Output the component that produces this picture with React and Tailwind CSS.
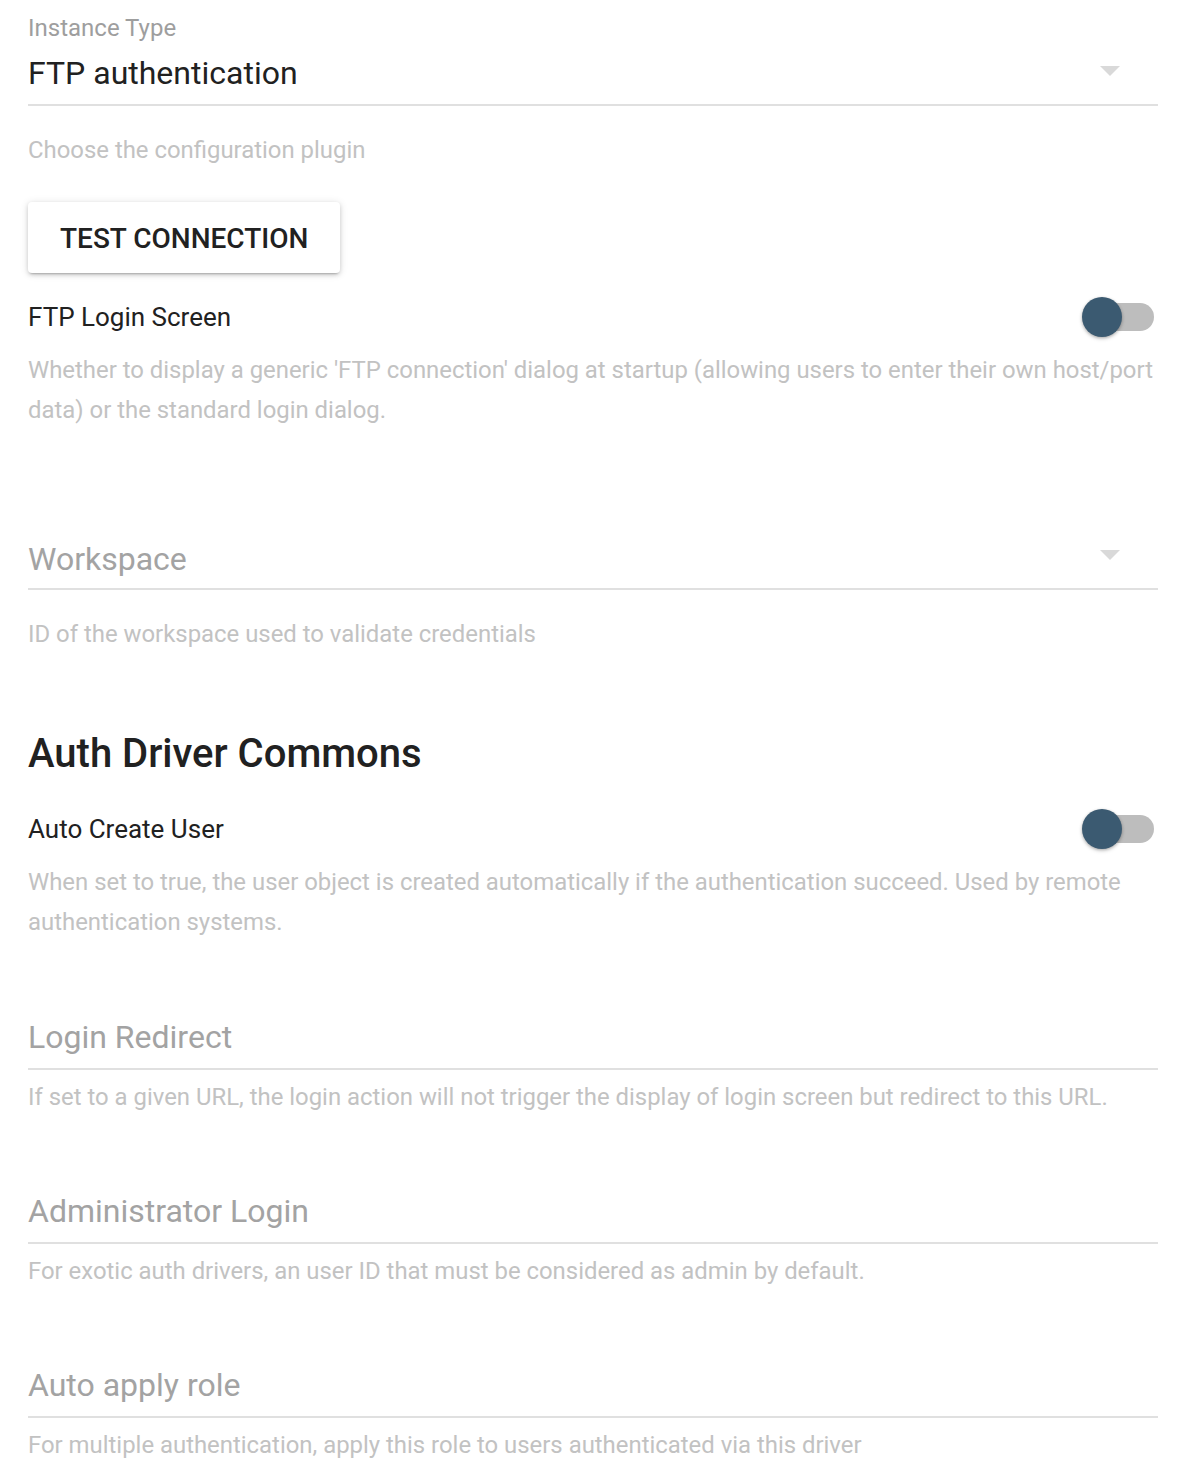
import React from 'react';

const Arrow = ({ className }) => (
  <svg className={className} width="20" height="10" viewBox="0 0 20 10">
    <path d="M0 0 L20 0 L10 10 Z" fill="#d9d9d9" />
  </svg>
);

const Toggle = () => (
  <div className="relative w-[72px] h-[40px] mr-[4px] shrink-0">
    <div className="absolute right-0 top-[6px] h-[28px] w-[68px] rounded-full bg-[#bdbdbd]" />
    <div className="absolute left-0 top-0 h-[40px] w-[40px] rounded-full bg-[#3b5a71] shadow-[0_1px_3px_rgba(0,0,0,0.25),0_2px_4px_rgba(0,0,0,0.12)]" />
  </div>
);

// plain text field: floating label as placeholder, underline, helper
const TextField = ({ label, helper, className }) => (
  <div className={className}>
    <div className="pb-[15px] border-b-2 border-[#e0e0e0]">
      <div className="text-[32px] leading-[32px] text-[#a3a3a3]">{label}</div>
    </div>
    <div className="mt-[15px] text-[23.9px] leading-[24px] text-[#c2c2c2]">{helper}</div>
  </div>
);

const SwitchRow = ({ label, helper, className }) => (
  <div className={className}>
    <div className="flex items-center justify-between h-[40px]">
      <span className="text-[26px] text-[#212121]">{label}</span>
      <Toggle />
    </div>
    <p className="mt-[13px] text-[23.9px] leading-[40px] text-[#c2c2c2]">{helper}</p>
  </div>
);

export default function App() {
  return (
    <div className="min-h-screen bg-white font-['Roboto',sans-serif] pl-[28px] pr-[22px] pt-[16px] pb-[10px]">
      {/* Instance type select */}
      <div>
        <div className="text-[24px] leading-[24px] text-[#9e9e9e]">Instance Type</div>
        <div className="mt-[17px] pb-[15px] border-b-2 border-[#e0e0e0] flex justify-between items-start">
          <span className="text-[32px] leading-[32px] text-[#212121]">FTP authentication</span>
          <Arrow className="mt-[9px] mr-[38px]" />
        </div>
        <div className="mt-[32px] text-[23.9px] leading-[24px] text-[#c2c2c2]">Choose the configuration plugin</div>
      </div>

      <button className="mt-[40px] h-[71px] pt-[3px] px-[32px] rounded-[4px] bg-white text-[28px] font-medium text-[#212121] shadow-[0_3px_2px_-2px_rgba(0,0,0,0.2),0_2px_4px_0_rgba(0,0,0,0.14),0_1px_8px_0_rgba(0,0,0,0.12)]">
        TEST CONNECTION
      </button>

      <SwitchRow
        className="mt-[24px]"
        label="FTP Login Screen"
        helper="Whether to display a generic 'FTP connection' dialog at startup (allowing users to enter their own host/port data) or the standard login dialog."
      />

      {/* Workspace select */}
      <div className="mt-[113px]">
        <div className="pb-[13px] border-b-2 border-[#e0e0e0] flex justify-between items-start">
          <span className="text-[32px] leading-[32px] text-[#a3a3a3]">Workspace</span>
          <Arrow className="mt-[7px] mr-[38px]" />
        </div>
        <div className="mt-[32px] text-[23.9px] leading-[24px] text-[#c2c2c2]">ID of the workspace used to validate credentials</div>
      </div>

      <h2 className="mt-[84px] text-[40px] leading-[48px] font-medium text-[#212121]">Auth Driver Commons</h2>

      <SwitchRow
        className="mt-[31px]"
        label="Auto Create User"
        helper="When set to true, the user object is created automatically if the authentication succeed. Used by remote authentication systems."
      />

      <TextField
        className="mt-[79px]"
        label="Login Redirect"
        helper="If set to a given URL, the login action will not trigger the display of login screen but redirect to this URL."
      />
      <TextField
        className="mt-[86px]"
        label="Administrator Login"
        helper="For exotic auth drivers, an user ID that must be considered as admin by default."
      />
      <TextField
        className="mt-[86px]"
        label="Auto apply role"
        helper="For multiple authentication, apply this role to users authenticated via this driver"
      />
    </div>
  );
}
